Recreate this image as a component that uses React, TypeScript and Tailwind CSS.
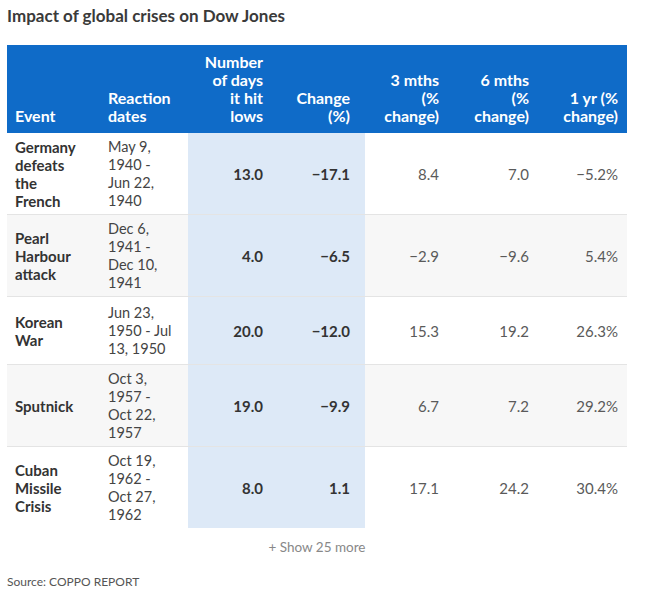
import React from "react";

interface Row {
  event: string;
  dates: string[];
  days: string;
  change: string;
  m3: string;
  m6: string;
  y1: string;
}

const rows: Row[] = [
  { event: "Germany defeats the French", dates: ["May 9,", "1940 -", "Jun 22,", "1940"], days: "13.0", change: "−17.1", m3: "8.4", m6: "7.0", y1: "−5.2%" },
  { event: "Pearl Harbour attack", dates: ["Dec 6,", "1941 -", "Dec 10,", "1941"], days: "4.0", change: "−6.5", m3: "−2.9", m6: "−9.6", y1: "5.4%" },
  { event: "Korean War", dates: ["Jun 23,", "1950 - Jul", "13, 1950"], days: "20.0", change: "−12.0", m3: "15.3", m6: "19.2", y1: "26.3%" },
  { event: "Sputnick", dates: ["Oct 3,", "1957 -", "Oct 22,", "1957"], days: "19.0", change: "−9.9", m3: "6.7", m6: "7.2", y1: "29.2%" },
  { event: "Cuban Missile Crisis", dates: ["Oct 19,", "1962 -", "Oct 27,", "1962"], days: "8.0", change: "1.1", m3: "17.1", m6: "24.2", y1: "30.4%" },
];

export default function App() {
  return (
    <div className="w-[651px] h-[615px] bg-white px-[7px] pt-[5px] font-['Lato','Liberation_Sans',sans-serif] text-[#333]">
      <h1 className="text-[17px] font-bold leading-[22px] text-[#3a3a3a]">
        Impact of global crises on Dow Jones
      </h1>

      <table className="mt-[18px] w-[620px] table-fixed border-collapse text-[15px] leading-[18px]">
        <colgroup>
          <col className="w-[93px]" />
          <col className="w-[88px]" />
          <col className="w-[89px]" />
          <col className="w-[88px]" />
          <col className="w-[82px]" />
          <col className="w-[90px]" />
          <col className="w-[90px]" />
        </colgroup>
        <thead>
          <tr className="bg-[#0f6bc8] text-white text-[16px] font-bold">
            <th className="align-bottom text-left pl-2 pt-2 pb-2">Event</th>
            <th className="align-bottom text-left pl-2 pt-2 pb-2">
              <div className="w-[66px]">Reaction dates</div>
            </th>
            <th className="align-bottom text-right pr-[14px] pt-2 pb-2">
              <div className="ml-auto w-[62px]">Number of days it hit lows</div>
            </th>
            <th className="align-bottom text-right pr-[15px] pt-2 pb-2">
              <div className="ml-auto w-[62px]">Change (%)</div>
            </th>
            <th className="align-bottom text-right pr-2 pt-2 pb-2">
              <div className="ml-auto w-[64px]">3 mths (% change)</div>
            </th>
            <th className="align-bottom text-right pr-2 pt-2 pb-2">
              <div className="ml-auto w-[64px]">6 mths (% change)</div>
            </th>
            <th className="align-bottom text-right pr-[9px] pt-2 pb-2">
              <div className="ml-auto w-[64px]">1 yr (% change)</div>
            </th>
          </tr>
        </thead>
        <tbody>
          {rows.map((r, i) => (
            <tr
              key={r.event}
              className={`${i % 2 === 1 ? "bg-[#f7f7f7]" : "bg-white"} ${i < rows.length - 1 ? "border-b border-[#e4e4e4]" : ""}`}
            >
              <td className="h-[68px] align-middle pl-2 pt-[5px] pb-[4px] font-bold text-[#333]">
                <div className="w-[66px]">{r.event}</div>
              </td>
              <td className="align-middle pl-2 pt-[5px] pb-[4px] text-[#444] text-[14.5px]">
                {r.dates.map((d) => (
                  <div key={d} className="whitespace-nowrap">{d}</div>
                ))}
              </td>
              <td className="align-middle text-right pr-[14px] bg-[#dde9f7] font-bold">{r.days}</td>
              <td className="align-middle text-right pr-[15px] bg-[#dde9f7] font-bold">{r.change}</td>
              <td className="align-middle text-right pr-2 text-[#5a5a5a]">{r.m3}</td>
              <td className="align-middle text-right pr-2 text-[#5a5a5a]">{r.m6}</td>
              <td className="align-middle text-right pr-[9px] text-[#5a5a5a]">{r.y1}</td>
            </tr>
          ))}
        </tbody>
      </table>

      <div className="w-[620px] flex justify-center pt-[11px]">
        <button className="text-[13.5px] text-[#888] leading-[16px]">+ Show 25 more</button>
      </div>

      <p className="mt-[19px] text-[12px] text-[#555] leading-[16px]">Source: COPPO REPORT</p>
    </div>
  );
}
